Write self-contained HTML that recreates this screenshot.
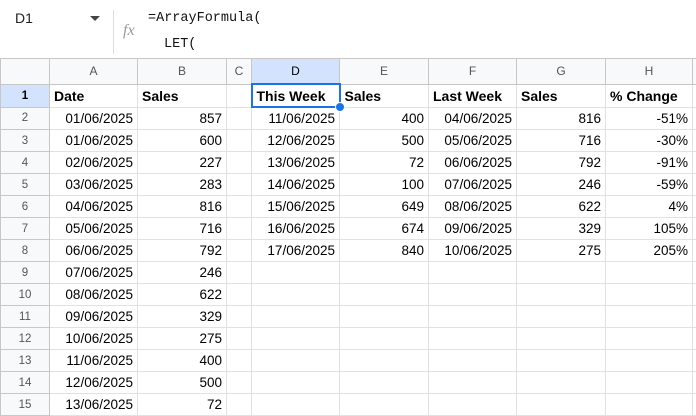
<!DOCTYPE html><html><head><style>
body{margin:0;width:696px;height:414px;overflow:hidden;background:#fff;font-family:"Liberation Sans",Arial,sans-serif;position:relative}
.t{position:absolute;white-space:nowrap}
table{position:absolute;left:0;top:58px;border-collapse:collapse;table-layout:fixed;width:730px}
td{border:1px solid #e1e1e1;height:21px;padding:0 4px;font-size:13.5px;color:#000;overflow:hidden;white-space:nowrap}
tr.h td{height:24px;background:#f8f9fa;color:#555;font-size:12px;text-align:center;border-color:#c7c7c7}
td.r{background:#f8f9fa;color:#555;font-size:11.5px;text-align:center;border-color:#c7c7c7}
td.n{text-align:right}
b{font-weight:bold;font-size:14px}
</style></head><body>
<div class="t" style="left:15px;top:10px;font-size:14px;color:#222">D1</div>
<div class="t" style="left:90px;top:16px;width:0;height:0;border-left:5px solid transparent;border-right:5px solid transparent;border-top:5px solid #444"></div>
<div class="t" style="left:113px;top:10px;width:1px;height:44px;background:#ddd"></div>
<div class="t" style="left:123px;top:22px;font-size:16px;color:#999;font-style:italic;font-family:'Liberation Serif',serif">fx</div>
<div class="t" style="left:148px;top:11px;font-size:13.5px;font-family:'Liberation Mono',monospace;color:#111">=ArrayFormula(</div>
<div class="t" style="left:164px;top:37px;font-size:13.5px;font-family:'Liberation Mono',monospace;color:#111">LET(</div>
<table>
<colgroup><col style="width:49px"><col style="width:88px"><col style="width:89px"><col style="width:25px"><col style="width:88px"><col style="width:89px"><col style="width:88px"><col style="width:89px"><col style="width:87px"><col style="width:38px"></colgroup>
<tr class="h"><td></td><td>A</td><td>B</td><td>C</td><td style="background:#d3e3fd;color:#000">D</td><td>E</td><td>F</td><td>G</td><td>H</td><td></td></tr>
<tr><td class="r" style="background:#d3e3fd;color:#000;font-weight:bold">1</td><td><b>Date</b></td><td><b>Sales</b></td><td></td><td style="border:2px solid #1a73e8;position:relative;overflow:visible"><b>This Week</b><span style="position:absolute;right:-6px;bottom:-6px;width:8px;height:8px;border-radius:50%;background:#1a73e8;border:1px solid #fff;z-index:2"></span></td><td><b>Sales</b></td><td><b>Last Week</b></td><td><b>Sales</b></td><td><b>% Change</b></td><td></td></tr>
<tr><td class="r">2</td><td class="n">01/06/2025</td><td class="n">857</td><td></td><td class="n">11/06/2025</td><td class="n">400</td><td class="n">04/06/2025</td><td class="n">816</td><td class="n">-51%</td><td></td></tr>
<tr><td class="r">3</td><td class="n">01/06/2025</td><td class="n">600</td><td></td><td class="n">12/06/2025</td><td class="n">500</td><td class="n">05/06/2025</td><td class="n">716</td><td class="n">-30%</td><td></td></tr>
<tr><td class="r">4</td><td class="n">02/06/2025</td><td class="n">227</td><td></td><td class="n">13/06/2025</td><td class="n">72</td><td class="n">06/06/2025</td><td class="n">792</td><td class="n">-91%</td><td></td></tr>
<tr><td class="r">5</td><td class="n">03/06/2025</td><td class="n">283</td><td></td><td class="n">14/06/2025</td><td class="n">100</td><td class="n">07/06/2025</td><td class="n">246</td><td class="n">-59%</td><td></td></tr>
<tr><td class="r">6</td><td class="n">04/06/2025</td><td class="n">816</td><td></td><td class="n">15/06/2025</td><td class="n">649</td><td class="n">08/06/2025</td><td class="n">622</td><td class="n">4%</td><td></td></tr>
<tr><td class="r">7</td><td class="n">05/06/2025</td><td class="n">716</td><td></td><td class="n">16/06/2025</td><td class="n">674</td><td class="n">09/06/2025</td><td class="n">329</td><td class="n">105%</td><td></td></tr>
<tr><td class="r">8</td><td class="n">06/06/2025</td><td class="n">792</td><td></td><td class="n">17/06/2025</td><td class="n">840</td><td class="n">10/06/2025</td><td class="n">275</td><td class="n">205%</td><td></td></tr>
<tr><td class="r">9</td><td class="n">07/06/2025</td><td class="n">246</td><td></td><td></td><td></td><td></td><td></td><td></td><td></td></tr>
<tr><td class="r">10</td><td class="n">08/06/2025</td><td class="n">622</td><td></td><td></td><td></td><td></td><td></td><td></td><td></td></tr>
<tr><td class="r">11</td><td class="n">09/06/2025</td><td class="n">329</td><td></td><td></td><td></td><td></td><td></td><td></td><td></td></tr>
<tr><td class="r">12</td><td class="n">10/06/2025</td><td class="n">275</td><td></td><td></td><td></td><td></td><td></td><td></td><td></td></tr>
<tr><td class="r">13</td><td class="n">11/06/2025</td><td class="n">400</td><td></td><td></td><td></td><td></td><td></td><td></td><td></td></tr>
<tr><td class="r">14</td><td class="n">12/06/2025</td><td class="n">500</td><td></td><td></td><td></td><td></td><td></td><td></td><td></td></tr>
<tr><td class="r">15</td><td class="n">13/06/2025</td><td class="n">72</td><td></td><td></td><td></td><td></td><td></td><td></td><td></td></tr>
</table>
</body></html>
